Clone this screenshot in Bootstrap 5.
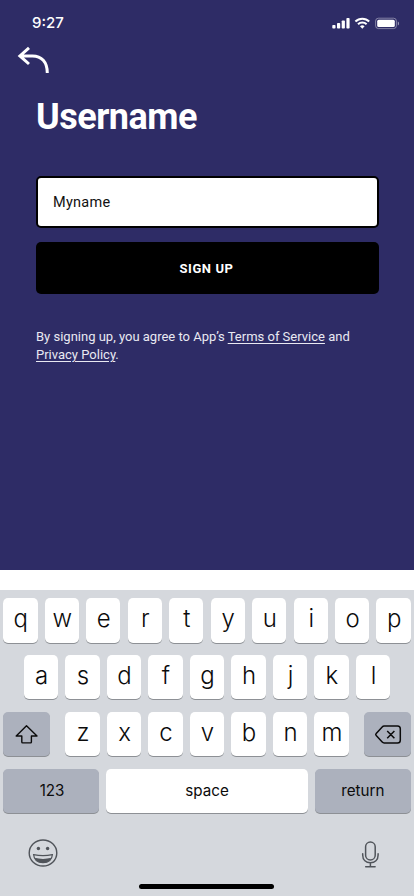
<!DOCTYPE html>
<html lang="en">
<head>
<meta charset="utf-8">
<meta name="viewport" content="width=device-width, initial-scale=1">
<title>Username</title>
<link href="https://cdn.jsdelivr.net/npm/bootstrap@5.3.0/dist/css/bootstrap.min.css" rel="stylesheet">
<style>
body{font-family:Roboto,"Liberation Sans",sans-serif;height:896px;overflow:hidden;background:#fff}
svg{display:block;flex:none}
.signup{height:570px;background:#2e2c66}
.status{height:44px;padding:1px 15px 0 32px;font:500 15px Inter,sans-serif}
.back{margin:2px 0 0 17px;width:33px;height:28px}
.form-area{padding:22px 35px 0 36px}
.title{font-size:36px;line-height:42px;letter-spacing:-.5px;margin-bottom:38px}
.name-field,.name-field:focus{height:52px;border:2px solid #000;border-radius:5px;padding:0 15px;font-size:14.5px;letter-spacing:.25px;color:#111;background:#fff;box-shadow:none;margin-bottom:14px}
.submit{height:52px;border-radius:5px;font-size:13px;letter-spacing:.6px;padding:2px 2px 0 0;margin-bottom:34px}
.terms{font-size:13px;line-height:18px;color:#e9e9f2}
.terms a{color:inherit;text-underline-offset:2px}
.keyboard{height:306px;margin-top:20px;padding:8px 3.2px 0;background:#d5d8dd;font-family:Inter,sans-serif;color:#0b0b0b}
.keys{gap:7.1px;height:44.6px;margin-bottom:12.3px}
.key{height:44.6px;width:34.4px;flex:none;border:0;border-radius:5px;background:#fff;box-shadow:0 1px 0 #8d9095;padding:0 0 2px 1px;font-size:24px;font-weight:300;line-height:1;color:#0b0b0b}
.key-alt{background:#acb1bd}
.key-side{width:46.4px;padding:0}
.key-word{width:95.8px;font-size:15.2px;font-weight:400;padding:0 0 1px}
.key-num{padding:0 0 0 2px}
.key-space{width:201.8px}
.tools{padding:12.5px 31px 0 25px;height:58px}
.home-bar{width:135px;height:5px;border-radius:3px;background:#000;transform:translateX(-1px)}
</style>
</head>
<body>
<main class="signup text-white">
  <div class="status d-flex align-items-center justify-content-between">
    <span>9:27</span>
    <svg width="68" height="14" viewBox="331 15.5 68 14" fill="#fff">
      <rect x="332.3" y="24.5" width="3.2" height="3.5" rx=".8"/><rect x="337" y="22.5" width="3.2" height="5.5" rx=".8"/><rect x="341.7" y="20" width="3.2" height="8" rx=".8"/><rect x="346.4" y="17.4" width="3.2" height="10.6" rx=".8"/>
      <g fill="none" stroke="#fff" stroke-width="2"><path d="M355.4 21a9.8 9.8 0 0 1 13.8 0M358 23.8a6.1 6.1 0 0 1 8.6 0"/></g><path d="M362.3 28.2l-2.3-2.4a3.4 3.4 0 0 1 4.6 0z"/>
      <rect x="375.6" y="17.7" width="20.8" height="10.4" rx="2.8" fill="none" stroke="#fff" stroke-opacity=".4"/><rect x="377.2" y="19.3" width="17.6" height="7.3" rx="1.5"/><path d="M397.8 21v4q1.3-.7 1.3-2t-1.3-2z" opacity=".5"/>
    </svg>
  </div>
  <svg class="back" viewBox="17 46 33 28" fill="none" stroke="#fff" stroke-width="3"><path d="M29 47.8L19.9 55.9 29 64M20 55.9H32.5C41.5 55.9 47.3 62 47.3 73"/></svg>
  <div class="form-area">
    <h1 class="title fw-bold">Username</h1>
    <input class="form-control name-field" type="text" value="Myname" aria-label="Username">
    <button class="btn btn-dark bg-black border-0 w-100 submit fw-bold">SIGN UP</button>
    <p class="terms mb-0">By signing up, you agree to App’s <a href="#">Terms of Service</a> and <a href="#">Privacy Policy</a>.</p>
  </div>
</main>
<section class="keyboard">
  <div class="keys d-flex justify-content-center">
    <button class="key">q</button><button class="key">w</button><button class="key">e</button><button class="key">r</button><button class="key">t</button><button class="key">y</button><button class="key">u</button><button class="key">i</button><button class="key">o</button><button class="key">p</button>
  </div>
  <div class="keys d-flex justify-content-center">
    <button class="key">a</button><button class="key">s</button><button class="key">d</button><button class="key">f</button><button class="key">g</button><button class="key">h</button><button class="key">j</button><button class="key">k</button><button class="key">l</button>
  </div>
  <div class="d-flex justify-content-between">
    <button class="key key-alt key-side d-flex align-items-center justify-content-center" aria-label="Shift">
      <svg width="24" height="20" viewBox="14 723.5 24 20" fill="none" stroke="#0b0b0b" stroke-width="1.4" stroke-linejoin="round"><path d="M26.5 725.3L16.2 735.5H21.8V741.5Q21.8 742.4 22.7 742.4H30.5Q31.4 742.4 31.4 741.5V735.5H37z"/></svg>
    </button>
    <div class="keys d-flex">
      <button class="key">z</button><button class="key">x</button><button class="key">c</button><button class="key">v</button><button class="key">b</button><button class="key">n</button><button class="key">m</button>
    </div>
    <button class="key key-alt key-side d-flex align-items-center justify-content-center" aria-label="Delete">
      <svg width="28" height="20" viewBox="374 724 28 20" fill="none" stroke="#0b0b0b" stroke-width="1.5" stroke-linejoin="round"><path d="M384.2 726H397.5Q400.3 726 400.3 728.8V740.2Q400.3 743 397.5 743H384.2Q383 743 382.2 742.1L376.2 735.6Q375.2 734.5 376.2 733.4L382.2 726.9Q383 726 384.2 726zM387.2 731l7.2 7.2M394.4 731l-7.2 7.2"/></svg>
    </button>
  </div>
  <div class="keys d-flex justify-content-between">
    <button class="key key-alt key-word key-num">123</button><button class="key key-word key-space">space</button><button class="key key-alt key-word">return</button>
  </div>
  <div class="tools d-flex align-items-start justify-content-between">
    <svg width="30" height="30" viewBox="28 838 30 30" fill="none" stroke="#50545a" stroke-width="1.4"><ellipse cx="43" cy="853" rx="13.8" ry="13"/><g fill="#50545a" stroke="none"><circle cx="38.4" cy="848.5" r="1.7"/><circle cx="47.6" cy="848.5" r="1.7"/><path d="M34.5 857.8Q43 860 51.5 857.8Q49.2 862.8 43 862.8T34.5 857.8z"/></g><path stroke-width="1.2" d="M33.6 854.7Q43 856.6 52.4 854.7Q51.6 862.7 43 862.7T33.6 854.7z"/></svg>
    <svg width="20" height="30" viewBox="360 838 20 30" fill="none" stroke="#50545a" stroke-width="1.5" stroke-linecap="round"><rect x="365.6" y="842" width="9.6" height="18" rx="4.8"/><path d="M362.7 853.7V855C362.7 860 366 862.8 370.4 862.8S378.1 860 378.1 855V853.7M370.4 862.8V866.8M365.7 866.8H375.1"/></svg>
  </div>
  <div class="home-bar mx-auto"></div>
</section>
<script src="https://cdn.jsdelivr.net/npm/bootstrap@5.3.0/dist/js/bootstrap.bundle.min.js"></script>
</body>
</html>
